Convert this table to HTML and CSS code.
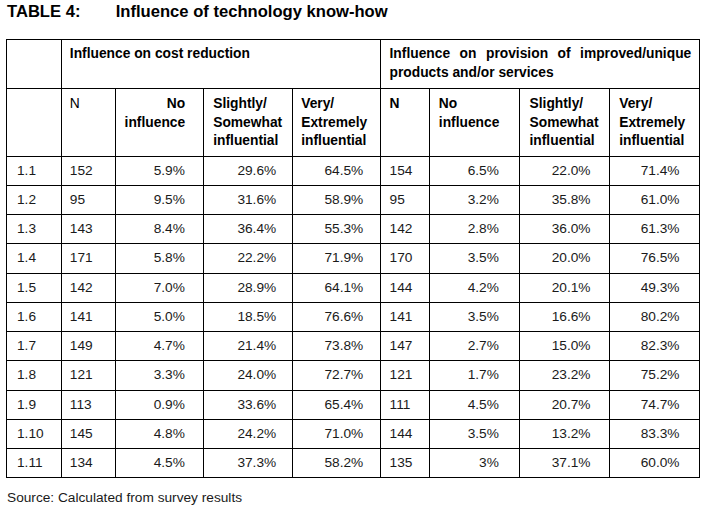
FILE: index.html
```html
<!DOCTYPE html>
<html>
<head>
<meta charset="utf-8">
<link rel="stylesheet" href="styles.css">
</head>
<body>
<div class="page">
  <h1 class="title"><span class="label">TABLE 4:</span><span>Influence of technology know-how</span></h1>
  <table class="data">
    <colgroup>
      <col class="c1"><col class="c2"><col class="c3"><col class="c4"><col class="c5">
      <col class="c6"><col class="c7"><col class="c8"><col class="c9">
    </colgroup>
    <thead>
      <tr class="h1">
        <th></th>
        <th colspan="4" class="group">Influence on cost reduction</th>
        <th colspan="4" class="group justify">Influence on provision of improved/unique products and/or services</th>
      </tr>
      <tr class="h2">
        <th></th>
        <th class="n light">N</th>
        <th class="right p3">No<br>influence</th>
        <th class="p4">Slightly/<br>Somewhat<br>influential</th>
        <th class="p5">Very/<br>Extremely<br>influential</th>
        <th class="n">N</th>
        <th class="p7">No<br>influence</th>
        <th class="p8">Slightly/<br>Somewhat<br>influential</th>
        <th class="p9">Very/<br>Extremely<br>influential</th>
      </tr>
    </thead>
    <tbody>
      <tr><td class="id">1.1</td><td class="n">152</td><td class="v3">5.9%</td><td class="v4">29.6%</td><td class="v5">64.5%</td><td class="n">154</td><td class="v7">6.5%</td><td class="v8">22.0%</td><td class="v9">71.4%</td></tr>
      <tr><td class="id">1.2</td><td class="n">95</td><td class="v3">9.5%</td><td class="v4">31.6%</td><td class="v5">58.9%</td><td class="n">95</td><td class="v7">3.2%</td><td class="v8">35.8%</td><td class="v9">61.0%</td></tr>
      <tr><td class="id">1.3</td><td class="n">143</td><td class="v3">8.4%</td><td class="v4">36.4%</td><td class="v5">55.3%</td><td class="n">142</td><td class="v7">2.8%</td><td class="v8">36.0%</td><td class="v9">61.3%</td></tr>
      <tr><td class="id">1.4</td><td class="n">171</td><td class="v3">5.8%</td><td class="v4">22.2%</td><td class="v5">71.9%</td><td class="n">170</td><td class="v7">3.5%</td><td class="v8">20.0%</td><td class="v9">76.5%</td></tr>
      <tr><td class="id">1.5</td><td class="n">142</td><td class="v3">7.0%</td><td class="v4">28.9%</td><td class="v5">64.1%</td><td class="n">144</td><td class="v7">4.2%</td><td class="v8">20.1%</td><td class="v9">49.3%</td></tr>
      <tr><td class="id">1.6</td><td class="n">141</td><td class="v3">5.0%</td><td class="v4">18.5%</td><td class="v5">76.6%</td><td class="n">141</td><td class="v7">3.5%</td><td class="v8">16.6%</td><td class="v9">80.2%</td></tr>
      <tr><td class="id">1.7</td><td class="n">149</td><td class="v3">4.7%</td><td class="v4">21.4%</td><td class="v5">73.8%</td><td class="n">147</td><td class="v7">2.7%</td><td class="v8">15.0%</td><td class="v9">82.3%</td></tr>
      <tr><td class="id">1.8</td><td class="n">121</td><td class="v3">3.3%</td><td class="v4">24.0%</td><td class="v5">72.7%</td><td class="n">121</td><td class="v7">1.7%</td><td class="v8">23.2%</td><td class="v9">75.2%</td></tr>
      <tr><td class="id">1.9</td><td class="n">113</td><td class="v3">0.9%</td><td class="v4">33.6%</td><td class="v5">65.4%</td><td class="n">111</td><td class="v7">4.5%</td><td class="v8">20.7%</td><td class="v9">74.7%</td></tr>
      <tr><td class="id">1.10</td><td class="n">145</td><td class="v3">4.8%</td><td class="v4">24.2%</td><td class="v5">71.0%</td><td class="n">144</td><td class="v7">3.5%</td><td class="v8">13.2%</td><td class="v9">83.3%</td></tr>
      <tr><td class="id">1.11</td><td class="n">134</td><td class="v3">4.5%</td><td class="v4">37.3%</td><td class="v5">58.2%</td><td class="n">135</td><td class="v7">3%</td><td class="v8">37.1%</td><td class="v9">60.0%</td></tr>
    </tbody>
  </table>
  <p class="source">Source: Calculated from survey results</p>
</div>
</body>
</html>
```

FILE: styles.css
```css
html, body {
  margin: 0;
  padding: 0;
  background: #fff;
}

body {
  font-family: "Liberation Sans", Arial, sans-serif;
  color: #111;
}

.page {
  padding: 1.5px 0 0 6px;
}

.title {
  display: flex;
  margin: 0 0 18.5px 1px;
  font-size: 16.6px;
  line-height: 19px;
  font-weight: bold;
  color: #000;
}

.title .label {
  width: 108.7px;
}

.data {
  border-collapse: collapse;
  table-layout: fixed;
  width: 693px;
  font-size: 13.7px;
}

.c1 { width: 54.5px; }
.c2 { width: 54.7px; }
.c3 { width: 88px; }
.c4 { width: 89px; }
.c5 { width: 88px; }
.c6 { width: 48.6px; }
.c7 { width: 90px; }
.c8 { width: 90px; }
.c9 { width: 90px; }

.data th,
.data td {
  border: 1px solid #000;
  padding: 0;
}

.data th {
  font-size: 13.8px;
  font-weight: bold;
  line-height: 18.7px;
  text-align: left;
  vertical-align: top;
  color: #000;
}

.h1 { height: 49px; }
.h1 th { padding-top: 5px; }
.h1 .group { padding-left: 8.3px; padding-right: 7.6px; }
.h1 .justify { text-align: justify; }

.h2 { height: 67.5px; }
.h2 th { padding-top: 6px; }
.h2 .light { font-weight: normal; }
.h2 .right { text-align: right; }

.data .n { padding-left: 8.3px; text-align: left; }
.h2 .p3 { padding-right: 18px; }
.h2 .p4 { padding-left: 9px; }
.h2 .p5 { padding-left: 8px; }
.h2 .p7 { padding-left: 9px; }
.h2 .p8 { padding-left: 9.7px; }
.h2 .p9 { padding-left: 9.4px; }

.data tbody tr { height: 29.25px; }

.data td {
  vertical-align: middle;
  text-align: right;
  line-height: 16px;
  color: #1a1a1a;
}

.data td.id { text-align: left; padding-left: 10px; }
.data td.v3 { padding-right: 18.3px; }
.data td.v4 { padding-right: 16px; }
.data td.v5 { padding-right: 17px; }
.data td.v7 { padding-right: 20px; }
.data td.v8 { padding-right: 18.3px; }
.data td.v9 { padding-right: 19.3px; }

.source {
  margin: 11.5px 0 0 1px;
  font-size: 13.7px;
  line-height: 16px;
  color: #1a1a1a;
}
```
